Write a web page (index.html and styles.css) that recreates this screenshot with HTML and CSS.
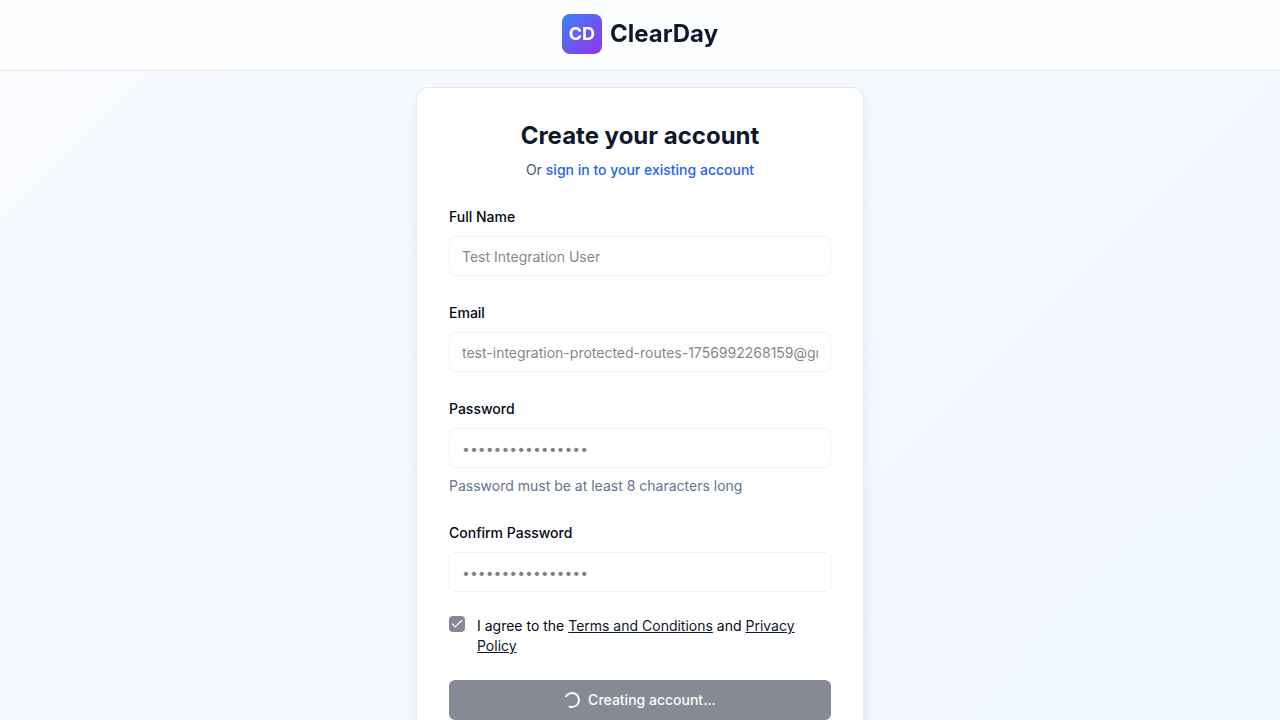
FILE: index.html
```html
<!DOCTYPE html>
<html lang="en">
<head>
<meta charset="utf-8">
<meta name="viewport" content="width=device-width, initial-scale=1">
<title>ClearDay</title>
<link rel="stylesheet" href="styles.css">
</head>
<body>
<div class="page">
  <header class="header">
    <span class="logo">CD</span>
    <span class="brand">ClearDay</span>
  </header>
  <main class="main">
    <section class="card">
      <h1 class="title">Create your account</h1>
      <p class="subtitle">Or <a class="signin" href="#">sign in to your existing account</a></p>
      <form class="form">
        <div class="field">
          <label class="label" for="name">Full Name</label>
          <input class="input" id="name" type="text" value="Test Integration User" disabled>
        </div>
        <div class="field">
          <label class="label" for="email">Email</label>
          <input class="input" id="email" type="email" value="test-integration-protected-routes-1756992268159@gmail.com" disabled>
        </div>
        <div class="field">
          <label class="label" for="password">Password</label>
          <input class="input" id="password" type="password" value="TestPassword123!" disabled>
          <p class="hint">Password must be at least 8 characters long</p>
        </div>
        <div class="field">
          <label class="label" for="confirm">Confirm Password</label>
          <input class="input" id="confirm" type="password" value="TestPassword123!" disabled>
        </div>
        <div class="terms">
          <span class="check">
            <input class="checkbox" id="terms" type="checkbox" checked disabled>
            <svg class="tick" viewBox="0 0 24 24" aria-hidden="true"><path d="M20 6 9 17l-5-5"/></svg>
          </span>
          <label class="terms-label" for="terms">I agree to the <a href="#">Terms and Conditions</a> and <a href="#">Privacy Policy</a></label>
        </div>
        <button class="submit" type="submit" disabled><span class="spinner"></span>Creating account...</button>
      </form>
    </section>
  </main>
</div>
</body>
</html>
```
FILE: styles.css
```css
* { box-sizing: border-box; }
body {
  margin: 0;
  font-family: Inter, "Liberation Sans", sans-serif;
  font-size: 14px;
  line-height: 20px;
  color: #020817;
}
h1, p { margin: 0; }
.page {
  min-height: 100vh;
  background: linear-gradient(135deg, #f8fafc, #eff6ff);
}
.header {
  display: flex;
  justify-content: center;
  align-items: center;
  gap: 8px;
  padding: 14px 16px 16px;
  background: rgba(255, 255, 255, 0.8);
  backdrop-filter: blur(8px);
  border-bottom: 1px solid #e2e8f0;
}
.logo {
  display: flex;
  align-items: center;
  justify-content: center;
  width: 40px;
  height: 40px;
  border-radius: 8px;
  background: linear-gradient(to bottom right, #3b82f6, #9333ea);
  color: #fff;
  font-size: 18px;
  font-weight: 700;
}
.brand {
  font-size: 24px;
  line-height: 32px;
  font-weight: 700;
  color: #0f172a;
}
.main {
  display: flex;
  justify-content: center;
  padding: 16px 16px 240px;
}
.card {
  width: 100%;
  max-width: 448px;
  padding: 32px;
  background: #fff;
  border: 1px solid #e2e8f0;
  border-radius: 12px;
  box-shadow: 0 10px 15px -3px rgba(0, 0, 0, 0.1), 0 4px 6px -4px rgba(0, 0, 0, 0.1);
}
.title {
  font-size: 24px;
  line-height: 32px;
  font-weight: 700;
  text-align: center;
  color: #0f172a;
}
.subtitle {
  margin-top: 8px;
  text-align: center;
  color: #4b5563;
}
.signin {
  color: #2563eb;
  font-weight: 500;
  text-decoration: none;
}
.form {
  display: flex;
  flex-direction: column;
  gap: 24px;
  margin-top: 24px;
}
.field {
  display: flex;
  flex-direction: column;
  gap: 8px;
}
.label {
  padding-top: 2px;
  line-height: 22px;
  font-weight: 500;
}
.input {
  width: 100%;
  height: 40px;
  padding: 8px 12px;
  border: 1px solid #e2e8f0;
  border-radius: 6px;
  background: #fff;
  color: #020817;
  font: inherit;
  opacity: 0.5;
}
.hint { color: #64748b; }
.terms {
  display: flex;
  align-items: flex-start;
  gap: 12px;
}
.check {
  display: grid;
  flex: none;
  opacity: 0.5;
}
.checkbox, .tick {
  grid-area: 1 / 1;
  width: 16px;
  height: 16px;
  margin: 0;
}
.checkbox {
  appearance: none;
  border-radius: 4px;
  background: #0f172a;
}
.tick {
  z-index: 1;
  padding: 1px;
  fill: none;
  stroke: #fff;
  stroke-width: 2;
  stroke-linecap: round;
  stroke-linejoin: round;
}
.terms-label a { color: #0f172a; text-decoration: underline; }
.submit {
  display: flex;
  align-items: center;
  justify-content: center;
  gap: 8px;
  width: 100%;
  height: 40px;
  border: 0;
  border-radius: 6px;
  background: #0f172a;
  color: #f8fafc;
  font: inherit;
  font-weight: 500;
  opacity: 0.5;
}
.spinner {
  width: 16px;
  height: 16px;
  border: 2px solid #f8fafc;
  border-left-color: transparent;
  border-radius: 50%;
  transform: rotate(-19deg);
}
```
